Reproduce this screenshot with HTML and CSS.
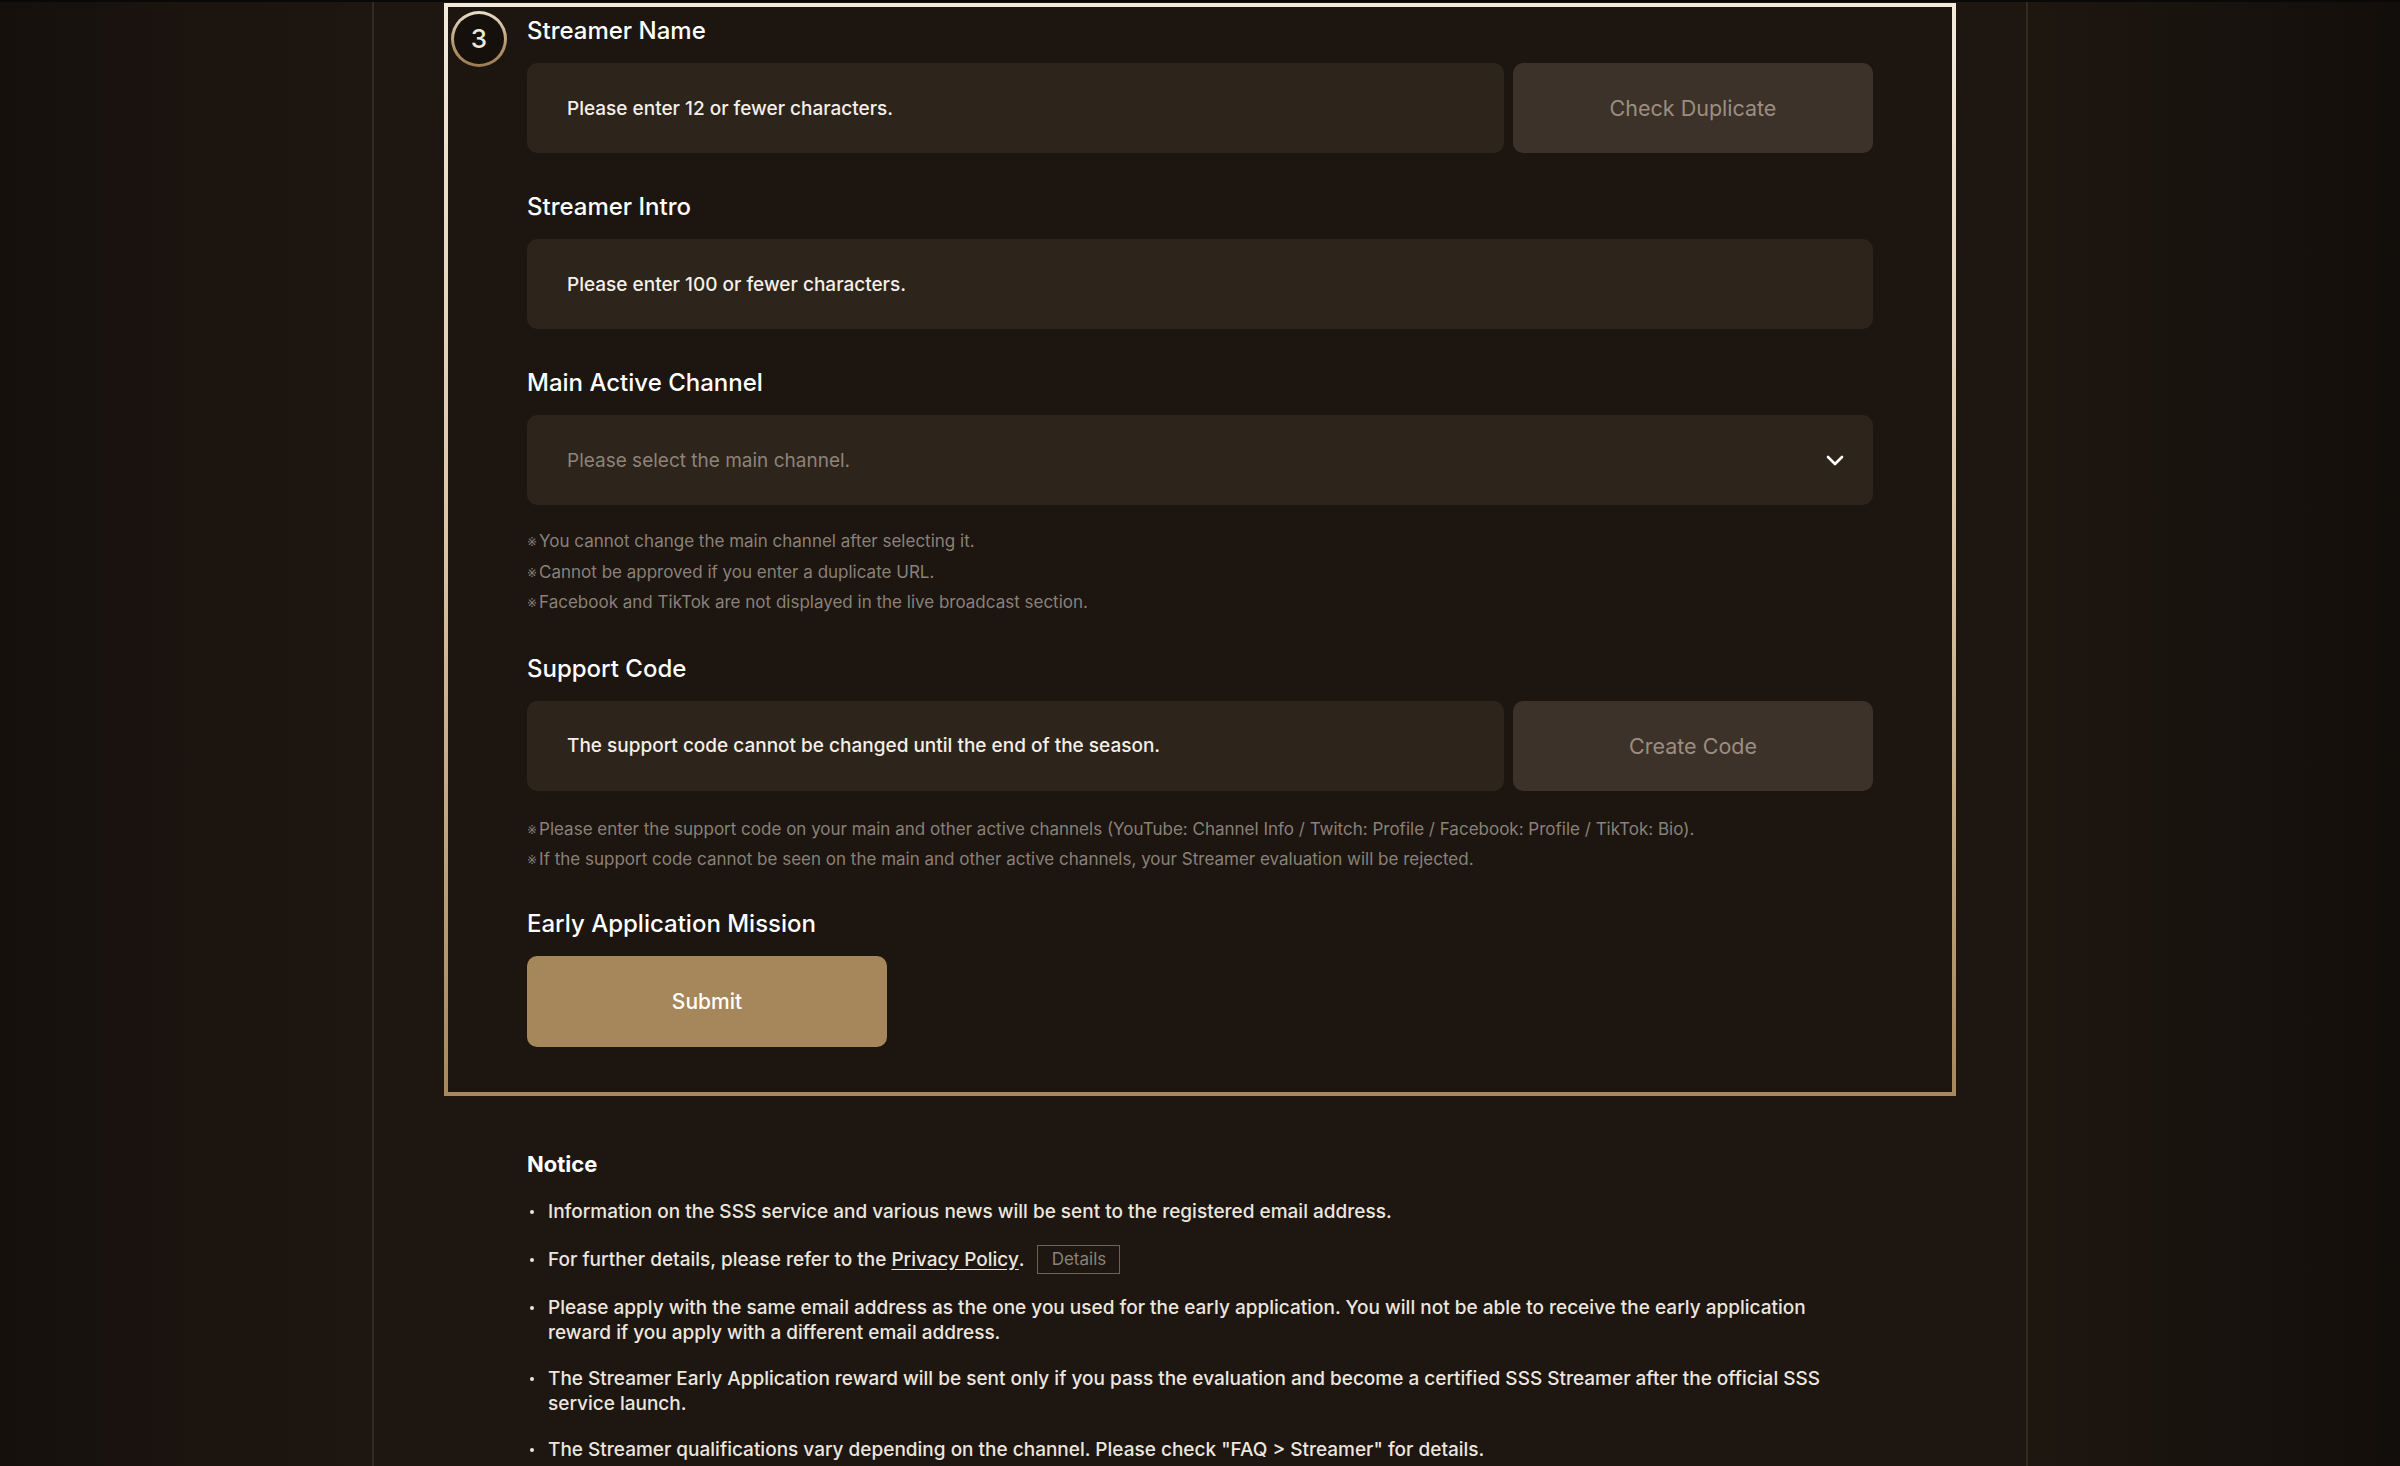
FILE: index.html
```html
<!DOCTYPE html>
<html lang="en">
<head>
<meta charset="utf-8">
<title>Streamer Application</title>
<link rel="stylesheet" href="styles.css">
</head>
<body>
<div class="page">
  <main class="column">
    <section class="step-box">
      <span class="step-num">3</span>

      <div class="field">
        <label class="field-label">Streamer Name</label>
        <div class="row">
          <div class="input input-value">Please enter 12 or fewer characters.</div>
          <button class="btn-side">Check Duplicate</button>
        </div>
      </div>

      <div class="field">
        <label class="field-label">Streamer Intro</label>
        <div class="input input-value">Please enter 100 or fewer characters.</div>
      </div>

      <div class="field">
        <label class="field-label">Main Active Channel</label>
        <div class="input select">
          <span class="placeholder">Please select the main channel.</span>
          <svg class="chevron" width="18" height="11" viewBox="0 0 18 11"><path d="M2 2 L9 9 L16 2" fill="none" stroke="#ffffff" stroke-width="2.6" stroke-linecap="round" stroke-linejoin="round"/></svg>
        </div>
        <ul class="notes">
          <li><span class="mark">※</span>You cannot change the main channel after selecting it.</li>
          <li><span class="mark">※</span>Cannot be approved if you enter a duplicate URL.</li>
          <li><span class="mark">※</span>Facebook and TikTok are not displayed in the live broadcast section.</li>
        </ul>
      </div>

      <div class="field">
        <label class="field-label">Support Code</label>
        <div class="row">
          <div class="input input-value">The support code cannot be changed until the end of the season.</div>
          <button class="btn-side">Create Code</button>
        </div>
        <ul class="notes notes-code">
          <li><span class="mark">※</span>Please enter the support code on your main and other active channels (YouTube: Channel Info / Twitch: Profile / Facebook: Profile / TikTok: Bio).</li>
          <li><span class="mark">※</span>If the support code cannot be seen on the main and other active channels, your Streamer evaluation will be rejected.</li>
        </ul>
      </div>

      <div class="field">
        <label class="field-label">Early Application Mission</label>
        <button class="btn-submit">Submit</button>
      </div>
    </section>

    <section class="notice">
      <h3 class="notice-title">Notice</h3>
      <ul class="notice-list">
        <li>Information on the SSS service and various news will be sent to the registered email address.</li>
        <li class="with-btn">For further details, please refer to the <a class="link">Privacy Policy</a>. <button class="btn-details">Details</button></li>
        <li>Please apply with the same email address as the one you used for the early application. You will not be able to receive the early application reward if you apply with a different email address.</li>
        <li>The Streamer Early Application reward will be sent only if you pass the evaluation and become a certified SSS Streamer after the official SSS service launch.</li>
        <li>The Streamer qualifications vary depending on the channel. Please check "FAQ &gt; Streamer" for details.</li>
      </ul>
    </section>
  </main>
</div>
</body>
</html>
```

FILE: styles.css
```css
* { box-sizing: border-box; }

html, body {
  margin: 0;
  padding: 0;
  height: 100%;
}

body {
  font-family: Inter, "Noto Sans", "Noto Sans CJK KR", sans-serif;
  color: #f3eee8;
  background: linear-gradient(90deg, #15100c 0%, #1b140f 8%, #1e1610 15.5%, #1e1710 84.5%, #1a140e 90%, #120e0b 100%);
  overflow: hidden;
}

.page {
  border-top: 2px solid #0b0907;
  height: 100%;
}

.column {
  width: 1656px;
  margin: 0 auto;
  height: 100%;
  background: #1d1611;
  border-left: 2px solid #342a22;
  border-right: 2px solid #342a22;
  padding-top: 1px;
}

.step-box {
  position: relative;
  width: 1512px;
  margin: 0 auto;
  border: 4px solid;
  border-image: linear-gradient(180deg, #f4eadb 0%, #d9c3a3 50%, #a8885c 100%) 1;
  background: #1c1510;
  padding: 9px 79px 45px 79px;
  display: flex;
  flex-direction: column;
  gap: 39px;
}

.step-num {
  position: absolute;
  top: 4px;
  left: 3px;
  width: 56px;
  height: 56px;
  border-radius: 50%;
  border: 3px solid transparent;
  background: linear-gradient(#15100c, #15100c) padding-box,
              linear-gradient(180deg, #eadfcb 0%, #b59770 60%, #9b7b52 100%) border-box;
  display: flex;
  align-items: center;
  justify-content: center;
  font-size: 26px;
  font-weight: 500;
  color: #f1e7d8;
  line-height: 1;
}

.field {
  display: flex;
  flex-direction: column;
}

.field-label {
  font-size: 24px;
  font-weight: 500;
  line-height: 29px;
  color: #ffffff;
  margin-bottom: 18px;
}

.row {
  display: flex;
  gap: 9px;
}

.input {
  height: 90px;
  flex: none;
  background: #2d241c;
  border-radius: 10px;
  display: flex;
  align-items: center;
  padding: 0 40px;
  font-size: 19px;
}

.row .input {
  flex: 1;
}

.input-value {
  font-weight: 500;
  color: #f4efe8;
}

.select {
  justify-content: space-between;
  padding-right: 29px;
}

.placeholder {
  color: #8d8379;
  font-weight: 400;
}

.chevron {
  display: block;
}

.btn-side {
  width: 360px;
  height: 90px;
  flex: none;
  border: none;
  border-radius: 10px;
  background: #3d3229;
  color: #9b8e81;
  font-family: inherit;
  font-size: 21.5px;
  font-weight: 400;
}

.notes {
  list-style: none;
  margin: 21px 0 -3px 0;
  padding: 0;
  font-size: 17px;
  line-height: 30.5px;
  color: #8a8178;
}

.notes-code {
  margin-top: 23px;
  margin-bottom: -5px;
}

.mark {
  display: inline-block;
  font-family: "DejaVu Sans", sans-serif;
  font-size: 12px;
  line-height: 1;
  margin-right: 2px;
  vertical-align: 1px;
}

.btn-submit {
  width: 360px;
  height: 91px;
  border: none;
  border-radius: 10px;
  background: #a6875b;
  color: #ffffff;
  font-family: inherit;
  font-size: 21px;
  font-weight: 500;
}

.notice {
  width: 1346px;
  margin: 0 auto;
  padding-top: 55px;
}

.notice-title {
  margin: 0;
  font-size: 22px;
  line-height: 27px;
  font-weight: 700;
  color: #ffffff;
}

.notice-list {
  list-style: none;
  margin: 21px 0 0 0;
  padding: 0;
  display: flex;
  flex-direction: column;
  gap: 21px;
  max-width: 1326px;
}

.notice-list li {
  position: relative;
  padding-left: 21px;
  font-size: 19px;
  font-weight: 500;
  line-height: 25px;
  color: #ece6de;
}

.notice-list li::before {
  content: "";
  position: absolute;
  left: 3px;
  top: 11px;
  width: 4px;
  height: 4px;
  border-radius: 50%;
  background: #ece6de;
}

.notice-list li.with-btn {
  display: flex;
  align-items: center;
  white-space: pre;
  height: 29px;
}

.notice-list li.with-btn::before {
  top: 13px;
}

.link {
  color: #ece6de;
  text-decoration: underline;
  text-underline-offset: 3px;
}

.btn-details {
  margin-left: 8px;
  width: 83px;
  height: 29px;
  border: 1px solid #6e6255;
  background: transparent;
  color: #8c8277;
  font-family: inherit;
  font-size: 17px;
  font-weight: 400;
  padding: 0;
}
```
